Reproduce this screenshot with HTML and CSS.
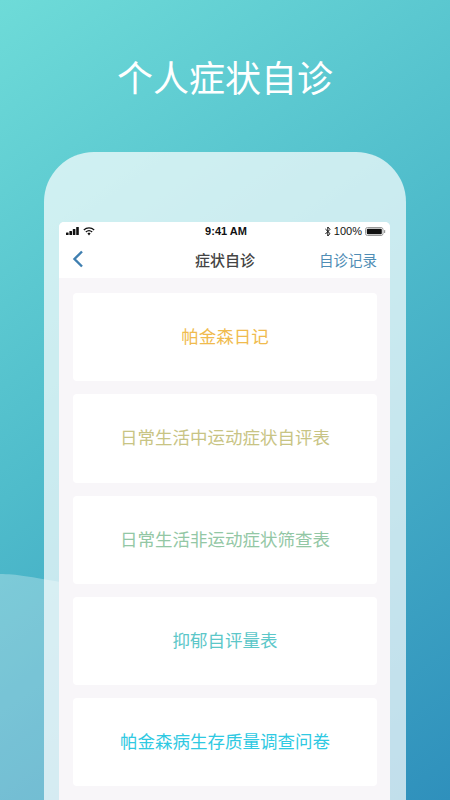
FILE: index.html
```html
<!DOCTYPE html>
<html lang="zh-CN">
<head>
    <meta charset="UTF-8">
    <meta name="viewport" content="width=device-width, initial-scale=1.0">
    <title>个人症状自诊</title>
    <link rel="stylesheet" href="styles.css">
</head>
<body>

<div class="poster">
    <svg class="wave" width="60" height="230" viewBox="0 0 60 230">
        <path d="M0 4 C16 4 32 7 60 12 L60 230 L0 230 Z" fill="#fff" fill-opacity="0.28"/>
    </svg>

    <h1 class="poster-title">个人症状自诊</h1>

    <div class="phone">
        <div class="screen">
            <div class="status-bar">
                <div class="status-side">
                    <svg width="14" height="8" viewBox="0 0 14 8">
                        <rect x="0" y="5.5" width="2.6" height="2.5" rx="0.5" fill="#111"/>
                        <rect x="3.4" y="4" width="2.6" height="4" rx="0.5" fill="#111"/>
                        <rect x="6.8" y="2" width="2.6" height="6" rx="0.5" fill="#111"/>
                        <rect x="10.2" y="0" width="2.6" height="8" rx="0.5" fill="#111"/>
                    </svg>
                    <svg width="12" height="9" viewBox="0 0 12 9">
                        <path d="M0.8 3 C3.8 0.2 8.2 0.2 11.2 3" fill="none" stroke="#111" stroke-width="1.2"/>
                        <path d="M2.8 5 C4.6 3.4 7.4 3.4 9.2 5" fill="none" stroke="#111" stroke-width="1.2"/>
                        <path d="M4.4 6.6 L6 5.4 L7.6 6.6 L6 8.4 Z" fill="#111"/>
                    </svg>
                </div>
                <div class="status-time">9:41 AM</div>
                <div class="status-side status-right">
                    <svg width="6" height="11" viewBox="0 0 6 11">
                        <path d="M0.4 3 L5 7.6 L2.8 10 L2.8 1 L5 3.4 L0.4 8" fill="none" stroke="#111" stroke-width="1"/>
                    </svg>
                    <span class="status-pct">100%</span>
                    <svg width="21" height="9" viewBox="0 0 21 9">
                        <rect x="0.5" y="0.5" width="17.5" height="8" rx="2" fill="none" stroke="#999"/>
                        <rect x="1.8" y="1.8" width="15" height="5.4" rx="1" fill="#111"/>
                        <rect x="19" y="3" width="1.2" height="3" rx="0.6" fill="#999"/>
                    </svg>
                </div>
            </div>

            <div class="nav-bar">
                <div class="nav-side">
                    <svg width="12" height="18" viewBox="0 0 12 18">
                        <path d="M10 1.5 L2.5 9 L10 16.5" fill="none" stroke="#3f7fb0" stroke-width="2.4"/>
                    </svg>
                </div>
                <div class="nav-title">症状自诊</div>
                <div class="nav-side nav-link">自诊记录</div>
            </div>

            <div class="list">
                <div class="card card-diary">帕金森日记</div>
                <div class="card card-motor">日常生活中运动症状自评表</div>
                <div class="card card-nonmotor">日常生活非运动症状筛查表</div>
                <div class="card card-mood">抑郁自评量表</div>
                <div class="card card-quality">帕金森病生存质量调查问卷</div>
            </div>
        </div>
    </div>
</div>

</body>
</html>
```

FILE: styles.css
```css
* {
    box-sizing: border-box;
}

body {
    margin: 0;
    font-family: "Noto Sans CJK SC", "Noto Sans", sans-serif;
}

.poster {
    position: relative;
    width: 450px;
    height: 800px;
    overflow: hidden;
    padding: 152px 44px 0;
    background: linear-gradient(145deg, #6edbd8 0%, #4fbccb 45%, #2f90bc 100%);
}

.wave {
    position: absolute;
    left: 0;
    top: 570px;
}

.poster-title {
    position: absolute;
    left: 0;
    right: 0;
    top: 48px;
    margin: 0;
    text-align: center;
    font-size: 36px;
    line-height: 56px;
    font-weight: 400;
    color: #fff;
}

.phone {
    position: relative;
    height: 648px;
    padding: 70px 16px 0 15px;
    border-radius: 50px 50px 0 0;
    background: rgba(255, 255, 255, 0.7);
}

.screen {
    height: 578px;
    overflow: hidden;
    border-radius: 5px 5px 0 0;
    background: #f8f6f9;
}

.status-bar {
    display: flex;
    justify-content: space-between;
    align-items: center;
    height: 18px;
    padding: 0 4px 0 7px;
    background: #fff;
    color: #111;
}

.status-side {
    flex: 1;
    display: flex;
    align-items: center;
    gap: 3px;
}

.status-right {
    justify-content: flex-end;
}

.status-time {
    font-family: "Liberation Sans", sans-serif;
    font-size: 11px;
    font-weight: bold;
}

.status-pct {
    font-family: "Liberation Sans", sans-serif;
    font-size: 11px;
}

.nav-bar {
    display: flex;
    align-items: center;
    height: 38px;
    padding: 0 13px;
    background: #fff;
}

.nav-side {
    flex: 1;
    display: flex;
    align-items: center;
}

.nav-title {
    margin-left: 1px;
    font-size: 15px;
    font-weight: 500;
    color: #444;
}

.nav-link {
    justify-content: flex-end;
    font-size: 14.5px;
    color: #4f8db5;
}

.list {
    display: flex;
    flex-direction: column;
    gap: 13px;
    padding: 15px 13px 0 14px;
}

.card {
    display: flex;
    justify-content: center;
    align-items: center;
    flex: none;
    height: 88.25px;
    padding-bottom: 3px;
    border-radius: 4px;
    background: #fff;
    font-size: 17.5px;
    font-weight: 400;
}

.card-diary {
    color: #f0bb4e;
}

.card-motor {
    color: #c8c484;
}

.card-nonmotor {
    color: #93c7a5;
}

.card-mood {
    color: #5cc7c9;
}

.card-quality {
    color: #2fc9e2;
}
```
